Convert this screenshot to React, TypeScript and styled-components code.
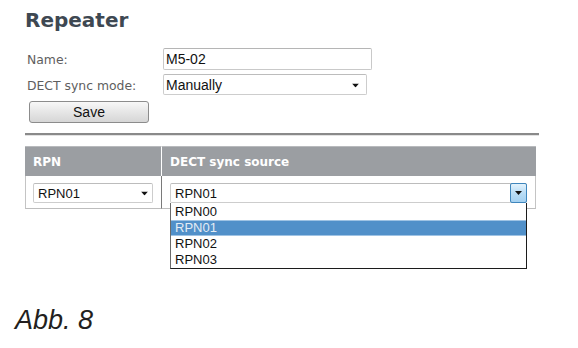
import React from "react";
import styled, { createGlobalStyle } from "styled-components";

const GlobalStyle = createGlobalStyle`
    html, body {
        margin: 0;
        padding: 0;
        background: #ffffff;
    }
`;

const rpnOptions = ["RPN00", "RPN01", "RPN02", "RPN03"];

const Arrow = () => (
    <svg width="7" height="4" viewBox="0 0 7 4">
        <polygon points="0,0 7,0 3.5,4" fill="#111" />
    </svg>
);

const App = () => {
    const selected = "RPN01";

    return (
        <Page>
            <GlobalStyle />
            <Heading>Repeater</Heading>

            <FormGrid>
                <Label>Name:</Label>
                <TextInput>M5-02</TextInput>
                <Label>DECT sync mode:</Label>
                <SelectBox width={204} height={21}>
                    <span>Manually</span>
                    <ArrowSlot right={7}>
                        <Arrow />
                    </ArrowSlot>
                </SelectBox>
            </FormGrid>

            <SaveButton>Save</SaveButton>

            <Rule />

            <Table>
                <HeadCell first>RPN</HeadCell>
                <HeadCell>DECT sync source</HeadCell>
                <BodyCell first>
                    <SelectBox width={120} height={20} small>
                        <span>RPN01</span>
                        <ArrowSlot right={4}>
                            <Arrow />
                        </ArrowSlot>
                    </SelectBox>
                </BodyCell>
                <BodyCell>
                    <OpenSelect>
                        <SelectBox width={357} height={20} small>
                            <span>{selected}</span>
                            <DropButton>
                                <Arrow />
                            </DropButton>
                        </SelectBox>
                        <OptionList>
                            {rpnOptions.map((opt) => (
                                <OptionItem key={opt} active={opt === selected}>
                                    {opt}
                                </OptionItem>
                            ))}
                        </OptionList>
                    </OpenSelect>
                </BodyCell>
            </Table>

            <Caption>Abb. 8</Caption>
        </Page>
    );
};

export default App;

// Styled components
const Page = styled.div`
    width: 578px;
    height: 348px;
    box-sizing: border-box;
    padding: 8px 0 0 25px;
    overflow: hidden;
    font-family: "DejaVu Sans", Verdana, sans-serif;
`;

const Heading = styled.h1`
    margin: 0;
    font-size: 20px;
    line-height: 24px;
    font-weight: bold;
    color: #3e4852;
`;

const FormGrid = styled.div`
    display: grid;
    grid-template-columns: 136px auto;
    justify-content: start;
    align-items: center;
    row-gap: 4px;
    margin: 16px 0 0 2px;
`;

const Label = styled.div`
    font-size: 12.4px;
    line-height: 16px;
    color: #5e5e5e;
    padding-top: 2px;
`;

const TextInput = styled.div`
    width: 209px;
    height: 22px;
    box-sizing: border-box;
    border: 1px solid #c9c9c9;
    border-top-color: #b5b5b5;
    border-radius: 2px;
    padding: 0 2px;
    display: flex;
    align-items: center;
    font-family: "Liberation Sans", Arial, sans-serif;
    font-size: 14px;
    color: #111;
`;

interface SelectBoxProps {
    width: number;
    height: number;
    small?: boolean;
}

const SelectBox = styled.div.withConfig({
    shouldForwardProp: (prop) => !["width", "height", "small"].includes(prop),
})<SelectBoxProps>`
    position: relative;
    width: ${(p) => p.width}px;
    height: ${(p) => p.height}px;
    box-sizing: border-box;
    border: 1px solid #cdcdcd;
    border-top-color: #bcbcbc;
    border-radius: 2px;
    background: #ffffff;
    display: flex;
    align-items: center;
    padding-left: ${(p) => (p.small ? 4 : 2)}px;
    font-family: "Liberation Sans", Arial, sans-serif;
    font-size: ${(p) => (p.small ? 13 : 14)}px;
    color: #111;
`;

const ArrowSlot = styled.div<{ right: number }>`
    position: absolute;
    top: 50%;
    right: ${(p) => p.right}px;
    transform: translateY(-40%);
    display: flex;
`;

const SaveButton = styled.div`
    width: 120px;
    height: 22px;
    box-sizing: border-box;
    margin: 6px 0 0 4px;
    border: 1px solid #8c8c8c;
    border-radius: 3px;
    background: linear-gradient(#f8f8f8, #e6e6e6 50%, #d6d6d6);
    display: flex;
    align-items: center;
    justify-content: center;
    font-family: "Liberation Sans", Arial, sans-serif;
    font-size: 14px;
    color: #111;
`;

const Rule = styled.div`
    width: 514px;
    margin-top: 10px;
    border-top: 2px solid #8a8a8a;
    border-bottom: 1px solid #e2e2e2;
`;

const Table = styled.div`
    display: grid;
    grid-template-columns: 137px 374px;
    margin-top: 10px;
`;

const HeadCell = styled.div<{ first?: boolean }>`
    height: 30px;
    box-sizing: border-box;
    background: #9b9ea2;
    border-top: 1px solid #b8babd;
    border-right: ${(p) => (p.first ? "1px solid #ffffff" : "none")};
    padding-left: 8px;
    display: flex;
    align-items: center;
    font-size: 12px;
    font-weight: bold;
    color: #ffffff;
`;

const BodyCell = styled.div<{ first?: boolean }>`
    height: 33px;
    box-sizing: border-box;
    padding: 7px 8px 0 ${(p) => (p.first ? 7 : 8)}px;
    border-bottom: 1px solid #bdbdbd;
    border-left: ${(p) => (p.first ? "1px solid #c4c4c4" : "none")};
    border-right: 1px solid ${(p) => (p.first ? "#7a7a7a" : "#c4c4c4")};
`;

const OpenSelect = styled.div`
    position: relative;
    width: 357px;
`;

const DropButton = styled.div`
    position: absolute;
    top: -1px;
    right: -1px;
    width: 17px;
    height: 20px;
    box-sizing: border-box;
    border: 1px solid #3f86bd;
    border-radius: 2px;
    background: linear-gradient(#e3f2fc, #b9ddf6 50%, #a4d0f0);
    display: flex;
    align-items: center;
    justify-content: center;
`;

const OptionList = styled.div`
    position: absolute;
    top: 100%;
    left: 0;
    width: 357px;
    box-sizing: border-box;
    background: #ffffff;
    border: 1px solid #6b6b6b;
    border-top: none;
    border-right-color: #1c1c1c;
    border-bottom-color: #1c1c1c;
    padding-top: 1px;
    z-index: 2;
`;

const OptionItem = styled.div<{ active: boolean }>`
    height: 16px;
    line-height: 16px;
    padding-left: 4px;
    font-family: "Liberation Sans", Arial, sans-serif;
    font-size: 13px;
    color: ${(p) => (p.active ? "#e4ecf4" : "#111")};
    background: ${(p) => (p.active ? "#5190c9" : "transparent")};
    box-shadow: ${(p) => (p.active ? "inset 0 1px #9fc3e4, inset 0 -1px #9fc3e4" : "none")};
`;

const Caption = styled.div`
    margin: 95px 0 0 -10px;
    font-family: "Liberation Sans", Arial, sans-serif;
    font-style: italic;
    font-size: 27px;
    line-height: 32px;
    color: #231f20;
`;
